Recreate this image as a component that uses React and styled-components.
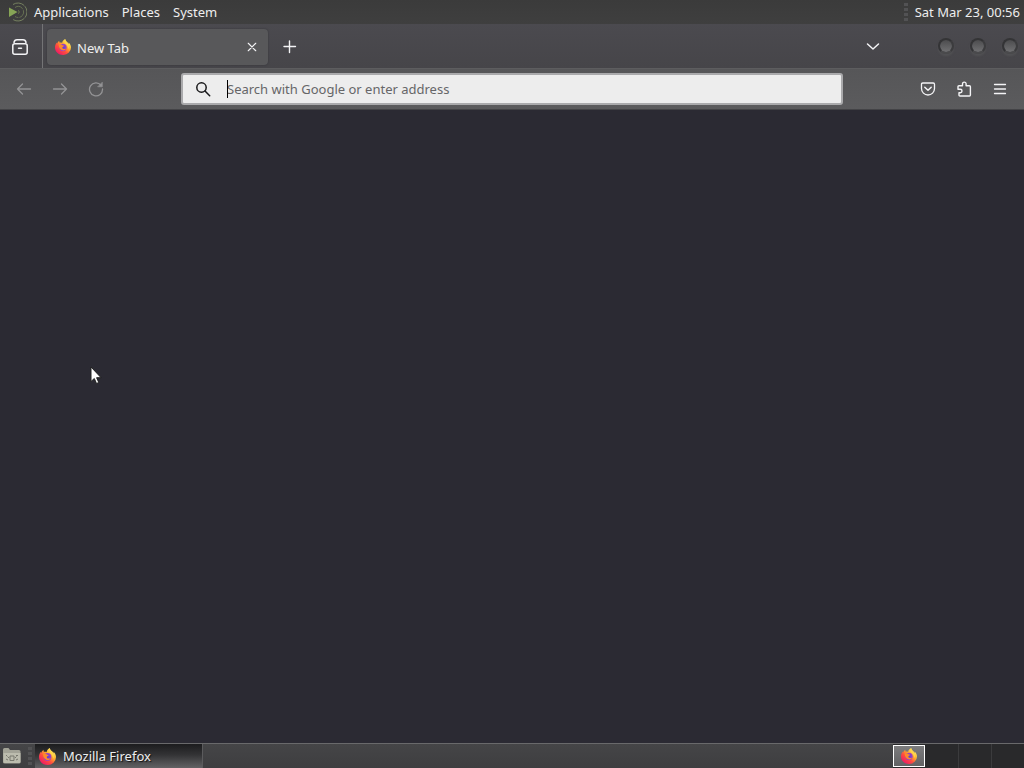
import React from "react";
import styled, { createGlobalStyle } from "styled-components";

const GlobalStyle = createGlobalStyle`
  *, *::before, *::after {
    box-sizing: border-box;
  }

  body {
    margin: 0;
    background: #2b2a33;
    color: #eee;
    font: 13px/18px "Noto Sans", sans-serif;
  }

  button, input {
    font: inherit;
    color: inherit;
  }
`;

const Desktop = styled.div`
  position: relative;
  display: flex;
  flex-direction: column;
  min-height: 100vh;
`;

const TopPanel = styled.header`
  display: flex;
  align-items: center;
  height: 24px;
  padding: 0 4px 0 8px;
  background: linear-gradient(#3b3b3b, #3f3f3f);
`;

const Menu = styled.nav`
  display: flex;
  gap: 13px;
  margin-left: 7px;
`;

const MenuButton = styled.button`
  padding: 0;
  border: none;
  background: transparent;
`;

const Grip = styled.span`
  width: 4px;
  height: 18px;
  margin-left: ${props => (props.$end ? "auto" : "6px")};
  margin-right: ${props => (props.$end ? "7px" : "3px")};
  background: repeating-linear-gradient(#525254 0 3px, transparent 3px 5px);
`;

const TabBar = styled.div`
  display: flex;
  align-items: center;
  height: 44px;
  background: linear-gradient(#4b4a4f, #464549);
`;

const IconButton = styled.button`
  display: flex;
  flex: none;
  align-items: center;
  justify-content: center;
  width: 36px;
  height: 36px;
  padding: 0;
  border: none;
  background: transparent;
  color: ${props => (props.$dim ? "#939395" : "#f4f4f6")};
`;

const TabBarButton = styled(IconButton)`
  height: 40px;
  padding-top: 2px;
`;

const ListTabsButton = styled(TabBarButton)`
  margin-left: auto;
`;

const ViewArea = styled.div`
  display: flex;
  align-items: center;
  height: 44px;
  padding: 0 4px 0 2px;
  border-right: 1px solid #747476;
`;

const Tab = styled.div`
  display: flex;
  align-items: center;
  width: 221px;
  height: 36px;
  margin: 2px 4px 0;
  padding: 0 4px 0 8px;
  border-radius: 4px;
  background: #58585a;
  box-shadow: 0 0 2px #333338;
`;

const TabTitle = styled.span`
  flex: 1;
  margin-left: 6px;
  padding-top: 2px;
`;

const CloseButton = styled(IconButton)`
  width: 24px;
  height: 24px;
`;

const WindowControls = styled.div`
  display: flex;
  gap: 16px;
  margin: 0 6px 0 47px;
`;

const WindowButton = styled.button`
  width: 16px;
  height: 16px;
  padding: 0;
  border: 2px solid #343436;
  border-right-color: #3c3c3e;
  border-bottom-color: #4a4a4c;
  border-radius: 50%;
  background: linear-gradient(#4c4c4e, #707072);
  background-clip: padding-box;
  box-shadow: 0 2px 2px #525254;
`;

const Toolbar = styled.div`
  display: flex;
  align-items: center;
  height: 42px;
  padding: 0 6px;
  border-top: 1px solid #5d5d5f;
  border-bottom: 1px solid #434346;
  background: linear-gradient(#565658, #5b5b5d);
`;

const AddressBar = styled.label`
  display: flex;
  flex: 1;
  align-items: center;
  height: 32px;
  margin: 0 67px;
  padding: 0 12px;
  border: 2px solid #aaaaac;
  border-radius: 3px;
  background: #ededed;
  color: #18181a;
`;

const AddressField = styled.span`
  position: relative;
  display: flex;
  flex: 1;
  margin-left: 16px;
`;

const AddressInput = styled.input`
  width: 100%;
  padding: 0;
  border: none;
  outline: none;
  background: transparent;
  caret-color: transparent;

  &::placeholder {
    color: #666668;
    opacity: 1;
  }
`;

const Caret = styled.span`
  position: absolute;
  left: 0;
  top: 0;
  width: 1px;
  height: 18px;
  background: #000;
`;

const Page = styled.main`
  flex: 1;
  background: #2b2a33;
`;

const BottomPanel = styled.footer`
  display: flex;
  align-items: center;
  height: 25px;
  padding-left: 2px;
  border-top: 1px solid #69696b;
  background: linear-gradient(#454547, #3e3e40);
`;

const DesktopButton = styled(IconButton)`
  width: 20px;
  height: 24px;
`;

const TaskButton = styled.button`
  display: flex;
  align-items: center;
  gap: 7px;
  width: 168px;
  height: 24px;
  padding: 0 4px;
  border: none;
  border-right: 1px solid #5b5b5d;
  background: linear-gradient(#1c1c1e, #333335 45%, #626264);
  text-align: left;
  text-shadow: 1px 1px 1px #111;
`;

const Workspaces = styled.div`
  display: flex;
  align-items: center;
  height: 24px;
  margin-left: auto;
  background: #29292b;
`;

const Workspace = styled.button`
  width: 33px;
  height: 24px;
  padding: 0;
  border: none;
  border-right: 1px solid #3b3b3d;
  background: transparent;

  &:last-child {
    width: 32px;
    border-right: none;
  }
`;

const ActiveWorkspace = styled(Workspace)`
  display: flex;
  align-items: center;
  justify-content: center;
  width: 32px;
  height: 22px;
  margin-right: 1px;
  border: 1px solid #fff;
  background: linear-gradient(#7c7c7e, #626264);
`;

const Pointer = styled.svg`
  position: absolute;
  left: 90px;
  top: 366px;
`;

const Icon = ({ children, size = 16, ...props }) => (
  <svg
    width={size}
    height={size}
    viewBox="0 0 16 16"
    fill="none"
    stroke="currentColor"
    strokeWidth="1.3"
    strokeLinecap="round"
    strokeLinejoin="round"
    aria-hidden="true"
    {...props}
  >
    {children}
  </svg>
);

const FirefoxIcon = ({ id, size = 16 }) => (
  <svg width={size} height={size} viewBox="0 0 16 16" aria-hidden="true">
    <defs>
      <linearGradient id={`${id}-flame`} x1="0.85" y1="0.1" x2="0.2" y2="0.9">
        <stop offset="0" stopColor="#fff36b" />
        <stop offset="0.35" stopColor="#ffb22e" />
        <stop offset="0.65" stopColor="#ff4f3d" />
        <stop offset="1" stopColor="#ef1d63" />
      </linearGradient>
      <radialGradient id={`${id}-globe`}>
        <stop offset="0" stopColor="#5b43d6" />
        <stop offset="1" stopColor="#a341bd" />
      </radialGradient>
    </defs>
    <path
      fill={`url(#${id}-flame)`}
      d="M10.2 0c.1 1.3.7 2 1.7 2.9 1 .8 1.4 1.4 1.6 2.2.2-.5.2-1.1.1-1.6C15 4.7 16 6.5 16 8.5A7.8 7.5 0 0 1 8 16C3.5 16 0 12.7 0 8.5 0 6.500.7 4.700 1.800 3.500c0 .5 0 .9.2 1.200.4-1.200 1.300-2.200 2.300-3-.1.7 0 1.400.3 1.900.9-.2 1.800-.1 2.500.3C7.300 2.300 8.500.8 10.200 0z"
    />
    <circle cx="8" cy="8.5" r="3.7" fill={`url(#${id}-globe)`} />
    <path
      fill="#ff8a28"
      d="M3.800 5.500c1.500-.6 2.700-.2 3.700.7.5.4 1.200.4 1.700.5-.2.8-1.500 1-1.800 1.500-.4.8.4 1.700 1.500 1.700 1 0 1.500-.4 2.200-.2-.7 1.400-2.200 2-3.700 1.600-2.400-.6-3.900-3-3.600-5.800z"
    />
    <path
      fill="#ffd54a"
      d="M10.2 0c.1 1.3.7 2 1.7 2.9 2.3 2 2.7 4.6 1.500 7.100-.3-2.500-1.200-4-2.600-5C9.500 4 9 2 10.200 0z"
    />
  </svg>
);

const MateLogo = () => (
  <svg width="19" height="20" viewBox="0 0 19 20" fill="none" aria-hidden="true">
    <path d="M1 5.500v9.500l8.500-5z" fill="#87a556" />
    <path d="M5 2.500A9 9 0 1 1 5 17.500" stroke="#75805f" strokeDasharray="12 1" />
    <path d="M7 5.500A5.500 5.500 0 1 1 7 14.500" stroke="#667052" strokeDasharray="9 1" />
    <path d="M10 8.300a1.800 1.800 0 0 1 0 3.400" stroke="#67764a" />
  </svg>
);

const FolderIcon = () => (
  <svg width="20" height="18" viewBox="0 0 20 18" fill="none" aria-hidden="true">
    <path d="M1 2.500q0-1.500 1.500-1.500h4l1.500 2h9q1.500 0 1.500 1.500V15q0 1.500-1.500 1.500h-14Q1 16.500 1 15z" fill="#a3a397" />
    <path d="M1.500 6h17v9q0 1-1 1h-15q-1 0-1-1z" fill="#bcbcae" />
    <path d="M8 9h4v4.500H8zM4 8.500h1m9 0h2M4 12l2 1m10-1-2 1M5.500 9.500 7 11m7.500-1.500L13 11" stroke="#77776d" />
  </svg>
);

const App = () => (
  <>
    <GlobalStyle />
    <Desktop>
      <TopPanel>
        <MateLogo />
        <Menu aria-label="Desktop">
          <MenuButton>Applications</MenuButton>
          <MenuButton>Places</MenuButton>
          <MenuButton>System</MenuButton>
        </Menu>
        <Grip $end />
        <MenuButton>Sat Mar 23, 00:56</MenuButton>
      </TopPanel>

      <TabBar>
        <ViewArea>
          <TabBarButton aria-label="Firefox View">
            <Icon>
              <rect x="0.8" y="4.8" width="14.4" height="10.4" rx="2" strokeWidth="1.5" />
              <path d="M2 3.500Q2.500.8 5 .8h6q2.500 0 3 2.700" strokeWidth="1.5" />
              <path d="M6.500 9.300h3" strokeWidth="1.5" />
            </Icon>
          </TabBarButton>
        </ViewArea>
        <Tab>
          <FirefoxIcon id="tab" />
          <TabTitle>New Tab</TabTitle>
          <CloseButton aria-label="Close tab">
            <Icon size={10}>
              <path d="m2 2 12 12m0-12-12 12" strokeWidth="1.800" />
            </Icon>
          </CloseButton>
        </Tab>
        <TabBarButton aria-label="New tab">
          <Icon>
            <path d="M7.500 2v11.500M2 7.500h11.500" strokeWidth="1.400" />
          </Icon>
        </TabBarButton>
        <ListTabsButton aria-label="List all tabs">
          <Icon>
            <path d="m2.500 5 5.500 5 5.500-5" strokeWidth="1.5" />
          </Icon>
        </ListTabsButton>
        <WindowControls>
          <WindowButton aria-label="Minimize" />
          <WindowButton aria-label="Maximize" />
          <WindowButton aria-label="Close" />
        </WindowControls>
      </TabBar>

      <Toolbar>
        <IconButton $dim aria-label="Back">
          <Icon>
            <path d="M14.500 8h-13m5-5-5 5 5 5" />
          </Icon>
        </IconButton>
        <IconButton $dim aria-label="Forward">
          <Icon>
            <path d="M1.500 8h13m-5-5 5 5-5 5" />
          </Icon>
        </IconButton>
        <IconButton $dim aria-label="Reload">
          <Icon>
            <path d="M13 4.200A6.500 6.500 0 1 0 14.500 8" />
            <path d="M14.300 1.500v4.300H10z" fill="currentColor" strokeWidth="0.6" />
          </Icon>
        </IconButton>
        <AddressBar>
          <Icon>
            <circle cx="6.5" cy="6.5" r="4.7" strokeWidth="1.5" />
            <path d="m10 10 4.700 4.700" strokeWidth="1.5" />
          </Icon>
          <AddressField>
            <AddressInput
              type="text"
              aria-label="Address"
              placeholder="Search with Google or enter address"
            />
            <Caret />
          </AddressField>
        </AddressBar>
        <IconButton aria-label="Save to Pocket">
          <Icon>
            <path d="M2.800 2h10.400q1.300 0 1.300 1.300V7.500a6.500 6.500 0 0 1-13 0V3.300Q1.500 2 2.800 2z" />
            <path d="m4.800 6.300 3.200 3 3.200-3" strokeWidth="1.5" />
          </Icon>
        </IconButton>
        <IconButton aria-label="Extensions">
          <Icon>
            <path d="M6.500 4.700V2.900a1.800 1.800 0 0 1 3.600 0v1.800h3.300q1 0 1 1v8.300q0 1-1 1H4q-1 0-1-1v-2.300h1.300a1.700 1.700 0 0 0 0-3.400H2V5.700q0-1 1-1z" strokeWidth="1.400" />
          </Icon>
        </IconButton>
        <IconButton aria-label="Open application menu">
          <Icon>
            <path d="M2.500 3.500h11m-11 4.500h11m-11 4.500h11" />
          </Icon>
        </IconButton>
      </Toolbar>

      <Page />

      <BottomPanel>
        <DesktopButton aria-label="Show desktop">
          <FolderIcon />
        </DesktopButton>
        <Grip />
        <TaskButton>
          <FirefoxIcon id="task" size={17} />
          Mozilla Firefox
        </TaskButton>
        <Workspaces>
          <ActiveWorkspace aria-label="Workspace 1">
            <FirefoxIcon id="workspace" />
          </ActiveWorkspace>
          <Workspace aria-label="Workspace 2" />
          <Workspace aria-label="Workspace 3" />
          <Workspace aria-label="Workspace 4" />
        </Workspaces>
      </BottomPanel>

      <Pointer width="12" height="19" viewBox="0 0 12 19" aria-hidden="true">
        <path d="M1 1v14.500l3.300-3 2.200 5 2.300-1-2.200-4.800h4.500z" fill="#fff" stroke="#222" />
      </Pointer>
    </Desktop>
  </>
);

export default App;
